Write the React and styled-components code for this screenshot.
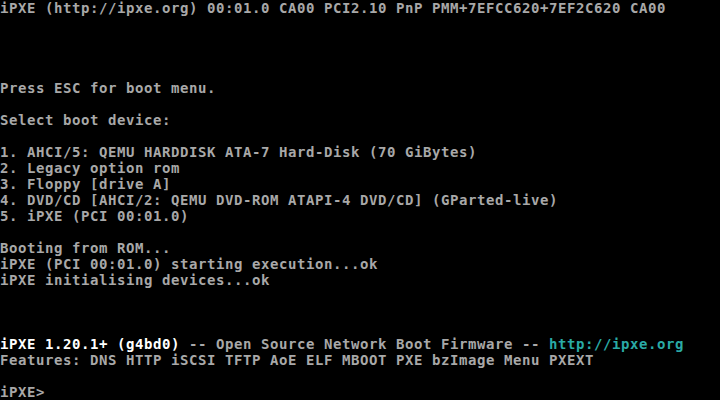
import React from 'react'
import styled, { createGlobalStyle } from 'styled-components'

const GlobalStyle = createGlobalStyle`
  html, body {
    margin: 0;
    padding: 0;
    background: #000;
  }
`

const lines = [
  [{ text: 'iPXE (http://ipxe.org) 00:01.0 CA00 PCI2.10 PnP PMM+7EFCC620+7EF2C620 CA00' }],
  [],
  [],
  [],
  [],
  [{ text: 'Press ESC for boot menu.' }],
  [],
  [{ text: 'Select boot device:' }],
  [],
  [{ text: '1. AHCI/5: QEMU HARDDISK ATA-7 Hard-Disk (70 GiBytes)' }],
  [{ text: '2. Legacy option rom' }],
  [{ text: '3. Floppy [drive A]' }],
  [{ text: '4. DVD/CD [AHCI/2: QEMU DVD-ROM ATAPI-4 DVD/CD] (GParted-live)' }],
  [{ text: '5. iPXE (PCI 00:01.0)' }],
  [],
  [{ text: 'Booting from ROM...' }],
  [{ text: 'iPXE (PCI 00:01.0) starting execution...ok' }],
  [{ text: 'iPXE initialising devices...ok' }],
  [],
  [],
  [],
  [
    { text: 'iPXE 1.20.1+ (g4bd0)', tone: 'bright' },
    { text: ' -- Open Source Network Boot Firmware -- ' },
    { text: 'http://ipxe.org', tone: 'cyan' },
  ],
  [{ text: 'Features: DNS HTTP iSCSI TFTP AoE ELF MBOOT PXE bzImage Menu PXEXT' }],
  [],
  [{ text: 'iPXE>' }],
]

const colors = {
  normal: '#a8a8a8',
  bright: '#ffffff',
  cyan: '#2aaaa6',
}

// 80x25 text mode: 9px x 16px cells
const Screen = styled.div`
  width: 720px;
  height: 400px;
  background: #000;
  overflow: hidden;
  font-family: "DejaVu Sans Mono", "Liberation Mono", monospace;
  font-size: 14px;
  font-weight: bold;
  letter-spacing: 0.57px;
  color: ${colors.normal};
`

const Row = styled.div`
  height: 16px;
  line-height: 16px;
  white-space: pre;
`

const Span = styled.span`
  color: ${p => colors[p.$tone || 'normal']};
`

export default function App() {
  return (
    <>
      <GlobalStyle />
      <Screen>
        {lines.map((parts, i) => (
          <Row key={i}>
            {parts.map((p, j) => (
              <Span key={j} $tone={p.tone}>{p.text}</Span>
            ))}
          </Row>
        ))}
      </Screen>
    </>
  )
}
